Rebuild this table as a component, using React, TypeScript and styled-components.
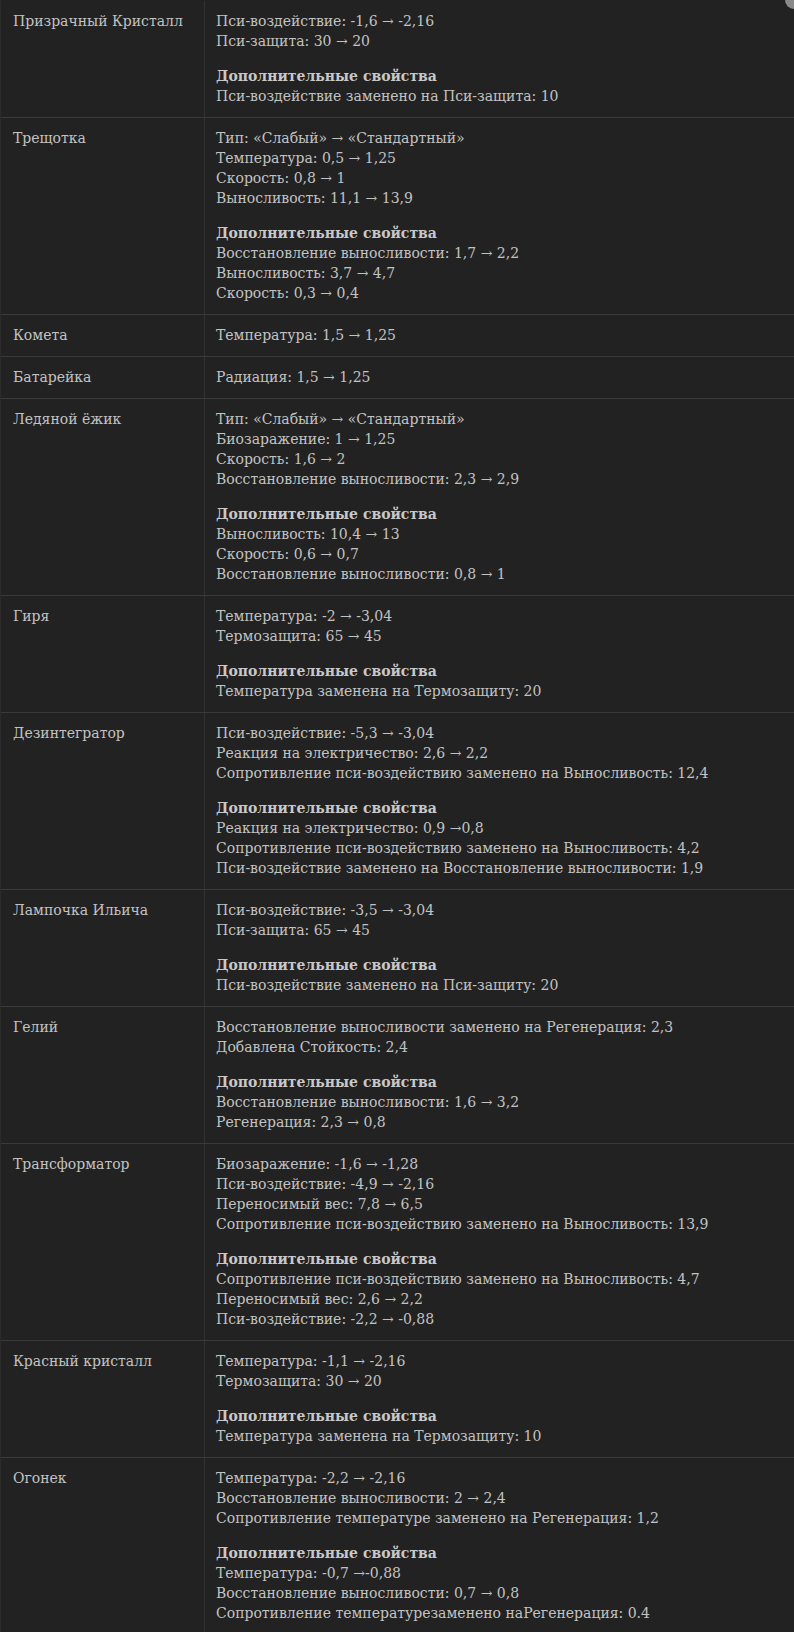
import React from "react";
import styled, { createGlobalStyle } from "styled-components";

const GlobalStyle = createGlobalStyle`
  html, body {
    margin: 0;
    padding: 0;
    background: #222222;
  }
  body {
    font-family: "DejaVu Serif", "Liberation Serif", serif;
  }
`;

type Item = {
  name: string;
  main: string[];
  extra?: string[];
};

const items: Item[] = [
  {
    name: "Призрачный Кристалл",
    main: ["Пси-воздействие: -1,6 → -2,16", "Пси-защита: 30 → 20"],
    extra: ["Пси-воздействие заменено на Пси-защита: 10"],
  },
  {
    name: "Трещотка",
    main: [
      "Тип: «Слабый» → «Стандартный»",
      "Температура: 0,5 → 1,25",
      "Скорость: 0,8 → 1",
      "Выносливость: 11,1 → 13,9",
    ],
    extra: [
      "Восстановление выносливости: 1,7 → 2,2",
      "Выносливость: 3,7 → 4,7",
      "Скорость: 0,3 → 0,4",
    ],
  },
  { name: "Комета", main: ["Температура: 1,5 → 1,25"] },
  { name: "Батарейка", main: ["Радиация: 1,5 → 1,25"] },
  {
    name: "Ледяной ёжик",
    main: [
      "Тип: «Слабый» → «Стандартный»",
      "Биозаражение: 1 → 1,25",
      "Скорость: 1,6 → 2",
      "Восстановление выносливости: 2,3 → 2,9",
    ],
    extra: [
      "Выносливость: 10,4 → 13",
      "Скорость: 0,6 → 0,7",
      "Восстановление выносливости: 0,8 → 1",
    ],
  },
  {
    name: "Гиря",
    main: ["Температура: -2 → -3,04", "Термозащита: 65 → 45"],
    extra: ["Температура заменена на Термозащиту: 20"],
  },
  {
    name: "Дезинтегратор",
    main: [
      "Пси-воздействие: -5,3 → -3,04",
      "Реакция на электричество: 2,6 → 2,2",
      "Сопротивление пси-воздействию заменено на Выносливость: 12,4",
    ],
    extra: [
      "Реакция на электричество: 0,9 →0,8",
      "Сопротивление пси-воздействию заменено на Выносливость: 4,2",
      "Пси-воздействие заменено на Восстановление выносливости: 1,9",
    ],
  },
  {
    name: "Лампочка Ильича",
    main: ["Пси-воздействие: -3,5 → -3,04", "Пси-защита: 65 → 45"],
    extra: ["Пси-воздействие заменено на Пси-защиту: 20"],
  },
  {
    name: "Гелий",
    main: [
      "Восстановление выносливости заменено на Регенерация: 2,3",
      "Добавлена Стойкость: 2,4",
    ],
    extra: [
      "Восстановление выносливости: 1,6 → 3,2",
      "Регенерация: 2,3 → 0,8",
    ],
  },
  {
    name: "Трансформатор",
    main: [
      "Биозаражение: -1,6 → -1,28",
      "Пси-воздействие: -4,9 → -2,16",
      "Переносимый вес: 7,8 → 6,5",
      "Сопротивление пси-воздействию заменено на Выносливость: 13,9",
    ],
    extra: [
      "Сопротивление пси-воздействию заменено на Выносливость: 4,7",
      "Переносимый вес: 2,6 → 2,2",
      "Пси-воздействие: -2,2 → -0,88",
    ],
  },
  {
    name: "Красный кристалл",
    main: ["Температура: -1,1 → -2,16", "Термозащита: 30 → 20"],
    extra: ["Температура заменена на Термозащиту: 10"],
  },
  {
    name: "Огонек",
    main: [
      "Температура: -2,2 → -2,16",
      "Восстановление выносливости: 2 → 2,4",
      "Сопротивление температуре заменено на Регенерация: 1,2",
    ],
    extra: [
      "Температура: -0,7 →-0,88",
      "Восстановление выносливости: 0,7 → 0,8",
      "Сопротивление температурезаменено наРегенерация: 0.4",
    ],
  },
];

const Page = styled.div`
  position: relative;
  background: #222222;
  color: #c2c2c2;
  font-size: 14px;
  line-height: 20px;
  min-height: 1632px;
  overflow: hidden;
`;

const Table = styled.div`
  display: flex;
  flex-direction: column;
  border-top: 1px solid #222222;
  border-left: 1px solid #2b2b2b;
`;

const Row = styled.div<{ $last?: boolean }>`
  display: grid;
  grid-template-columns: 204px 1fr;
  border-bottom: 1px solid ${(p) => (p.$last ? "transparent" : "#3a3a3a")};
`;

const NameCell = styled.div`
  padding: 10px 12px 11px 12px;
  border-right: 1px solid #333333;
`;

const InfoCell = styled.div`
  padding: 10px 12px 11px 11px;
  display: flex;
  flex-direction: column;
  gap: 15px;
`;

const Block = styled.div`
  display: flex;
  flex-direction: column;
`;

const Line = styled.div`
  white-space: nowrap;
`;

const Heading = styled.div`
  font-weight: bold;
  color: #c8c8c8;
`;

const CornerDot = styled.div`
  position: absolute;
  top: -9px;
  right: -9px;
  width: 18px;
  height: 18px;
  border-radius: 50%;
  background: #8a8a8a;
`;

export default function App() {
  return (
    <>
      <GlobalStyle />
      <Page>
        <Table>
          {items.map((it, i) => (
            <Row key={it.name} $last={i === items.length - 1}>
              <NameCell>{it.name}</NameCell>
              <InfoCell>
                <Block>
                  {it.main.map((l) => (
                    <Line key={l}>{l}</Line>
                  ))}
                </Block>
                {it.extra && (
                  <Block>
                    <Heading>Дополнительные свойства</Heading>
                    {it.extra.map((l) => (
                      <Line key={l}>{l}</Line>
                    ))}
                  </Block>
                )}
              </InfoCell>
            </Row>
          ))}
        </Table>
        <CornerDot />
      </Page>
    </>
  );
}
